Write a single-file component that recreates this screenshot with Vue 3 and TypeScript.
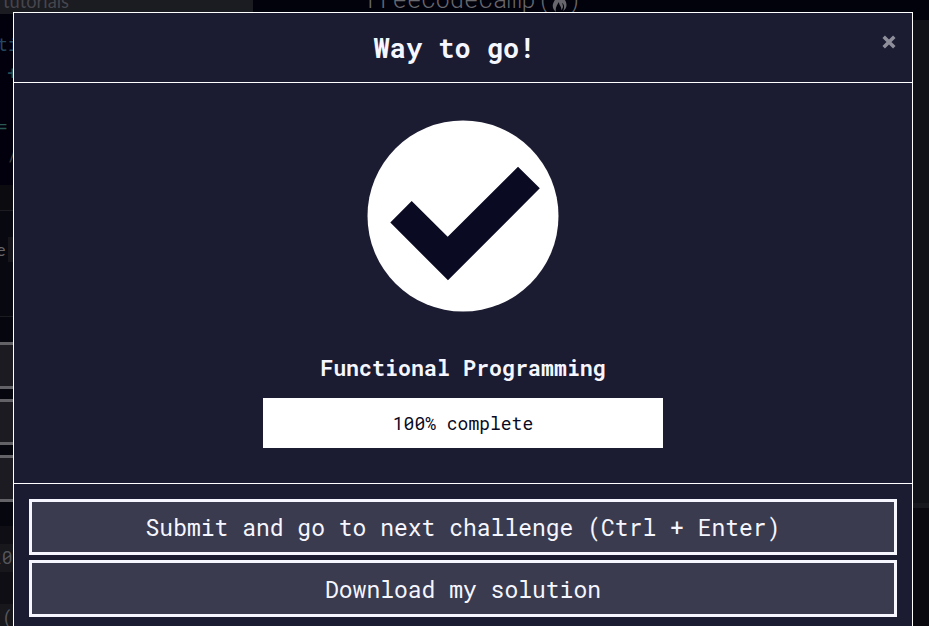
<script setup lang="ts">
interface Action {
  label: string
  kind: string
}

const block = 'Functional Programming'
const percent = 100
const actions: Action[] = [
  { label: 'Submit and go to next challenge (Ctrl + Enter)', kind: 'submit' },
  { label: 'Download my solution', kind: 'download' },
]
</script>

<template>
  <div class="page">
    <div class="backdrop">
      <header class="nav">
        <div class="search"><span>tutorials</span></div>
        <div class="brand">
          <span class="brand-name">freeCodeCamp</span>
          <span class="paren">(</span>
          <svg class="flame" width="17" height="20" viewBox="0 0 17 20">
            <path d="M6 0C7 4 3 7 2 11C1 15 3 17 5 19C4 15 6 12 8 9C8 13 11 13 10 17C13 15 12 12 11 10C13 11 14 14 12 18C17 15 16 9 13 6C12 4 13 3 12 0Z" fill="#66666c" />
          </svg>
          <span class="paren">)</span>
        </div>
      </header>
      <div class="workspace">
        <aside class="left">
          <div class="editor">
            <span class="code blue">ti</span>
            <span class="code teal indent">+</span>
            <span class="code green equals">=</span>
            <span class="code grey indent">/</span>
          </div>
          <div class="toolbar"></div>
          <div class="instructions"><span>e</span><i></i></div>
          <div class="tools">
            <div v-for="n in 3" :key="n" class="tool"></div>
          </div>
          <div class="console">
            <div class="line first"><span>20</span></div>
            <div class="line second"><span>(</span></div>
          </div>
        </aside>
        <aside class="right">
          <div class="preview"></div>
          <div class="output"></div>
        </aside>
      </div>
    </div>

    <section class="modal" role="dialog">
      <header class="modal-header">
        <h2>Way to go!</h2>
        <button class="close" type="button" aria-label="Close">
          <svg width="14" height="14" viewBox="0 0 14 14">
            <path d="M1.7 1.7L12.3 12.3M12.3 1.7L1.7 12.3" fill="none" stroke="#8e8e9b" stroke-width="3.5" />
          </svg>
        </button>
      </header>
      <div class="modal-body">
        <svg class="check" width="192" height="192" viewBox="0 0 192 192">
          <circle cx="96" cy="96" r="95.5" fill="#fff" />
          <path d="M23.3 102.5L44.7 81L80.7 116.7L151 46.7L172.8 68.3L81 160.3Z" fill="#0a0a23" />
        </svg>
        <h3>{{ block }}</h3>
        <div class="progress">
          <div class="bar" :style="{ width: percent + '%' }">{{ percent }}% complete</div>
        </div>
      </div>
      <footer class="modal-footer">
        <button v-for="a in actions" :key="a.kind" type="button" :class="['action', a.kind]">{{ a.label }}</button>
      </footer>
    </section>
  </div>
</template>

<style>
body { background: #02020c; overflow: hidden; }
</style>

<style scoped>
* { box-sizing: border-box; }
.page {
  position: relative;
  width: 929px;
  height: 626px;
  overflow: hidden;
  font-family: "Roboto Mono", "DejaVu Sans Mono", monospace;
}
.backdrop { display: flex; flex-direction: column; height: 626px; background: #02020c; }
.nav { display: flex; height: 20px; flex: none; overflow: hidden; }
.search {
  width: 253px;
  height: 14px;
  background: #1b1b22;
  color: #46464c;
  font: 18.3px/20px Lato, sans-serif;
}
.search span { display: block; margin: -9px 0 0 3px; }
.brand { display: flex; margin-left: 111px; color: #68686e; font-size: 24px; line-height: 24px; }
.brand-name { width: 173px; margin-top: -13px; font-weight: 300; letter-spacing: -0.1px; }
.paren { width: 14px; margin-top: -12px; font-family: Roboto, sans-serif; font-weight: 300; text-align: center; }
.flame { margin-top: -7px; }
.workspace { display: flex; justify-content: space-between; flex: 1; }
.left { width: 14px; overflow: hidden; background: #06060f; }
.editor { display: flex; flex-direction: column; height: 165px; padding-top: 11px; background: #02000d; font-size: 18px; }
.code { height: 28px; line-height: 27px; white-space: nowrap; }
.indent { padding-left: 7px; }
.equals { margin-top: 26px; margin-left: -3px; }
.blue { margin-left: -3px; color: #254760; }
.teal { color: #224e57; }
.green { color: #285953; }
.grey { color: #3b3f3d; }
.toolbar { height: 26px; background: #0b0b10; border-bottom: 1px solid #1c1c22; }
.instructions {
  display: flex;
  height: 106px;
  padding-top: 26px;
  background: #080811;
  border-bottom: 1px solid #1b1b22;
  color: #65656a;
  font: 18px/24px Lato, sans-serif;
}
.instructions span { width: 8px; margin-left: -4px; }
.instructions i { width: 10px; height: 25px; margin-left: 4px; background: #15151b; }
.tools { display: flex; flex-direction: column; gap: 10px; height: 209px; padding-top: 25px; background: #06060f; }
.tool { flex: none; height: 46.5px; border-top: 3px solid #626267; border-bottom: 3px solid #626267; background: #1b1b21; }
.console { height: 100px; padding-top: 18px; background: #0e0e14; color: #55555b; font-size: 18px; }
.line { background: #17171c; }
.first { height: 28px; line-height: 27px; }
.first span { display: block; margin-left: -9px; }
.second { height: 22px; margin-top: 32px; line-height: 26px; }
.second span { display: block; margin-left: 2px; }
.right { width: 17px; background: #09090f; }
.preview { height: 488px; background: #111118; border-bottom: 5px solid #18181f; }

.modal {
  position: absolute;
  left: 13px;
  top: 12px;
  width: 900px;
  height: 640px;
  background: #1b1b32;
  border: 1px solid #fff;
  color: #f5f6ff;
}
.modal-header {
  display: flex;
  justify-content: center;
  position: relative;
  height: 70px;
  padding-right: 17px;
  border-bottom: 1px solid #fff;
}
h2, h3 { margin: 0; font-weight: 700; white-space: nowrap; }
h2 { font-size: 27px; line-height: 32px; padding-top: 19px; }
.close {
  position: absolute;
  top: 22px;
  right: 16px;
  display: flex;
  padding: 0;
  border: 0;
  background: none;
}
.modal-body {
  display: flex;
  flex-direction: column;
  align-items: center;
  height: 401px;
  padding-top: 37px;
  border-bottom: 1px solid #fff;
}
.check { flex: none; }
h3 { margin-top: 41px; font-size: 21.65px; line-height: 30px; }
.progress { width: 400px; height: 50px; margin-top: 15px; }
.bar { height: 50px; background: #fff; color: #0a0a23; font-size: 18px; line-height: 51px; text-align: center; }
.modal-footer { display: flex; flex-direction: column; gap: 5px; padding: 15px; }
.action {
  width: 868px;
  height: 56px;
  padding: 0;
  border: 3px solid #f5f6ff;
  background: #3b3b4f;
  color: #f5f6ff;
  font: 23px/50px "Roboto Mono", "DejaVu Sans Mono", monospace;
}
.download { height: 57px; }
</style>
